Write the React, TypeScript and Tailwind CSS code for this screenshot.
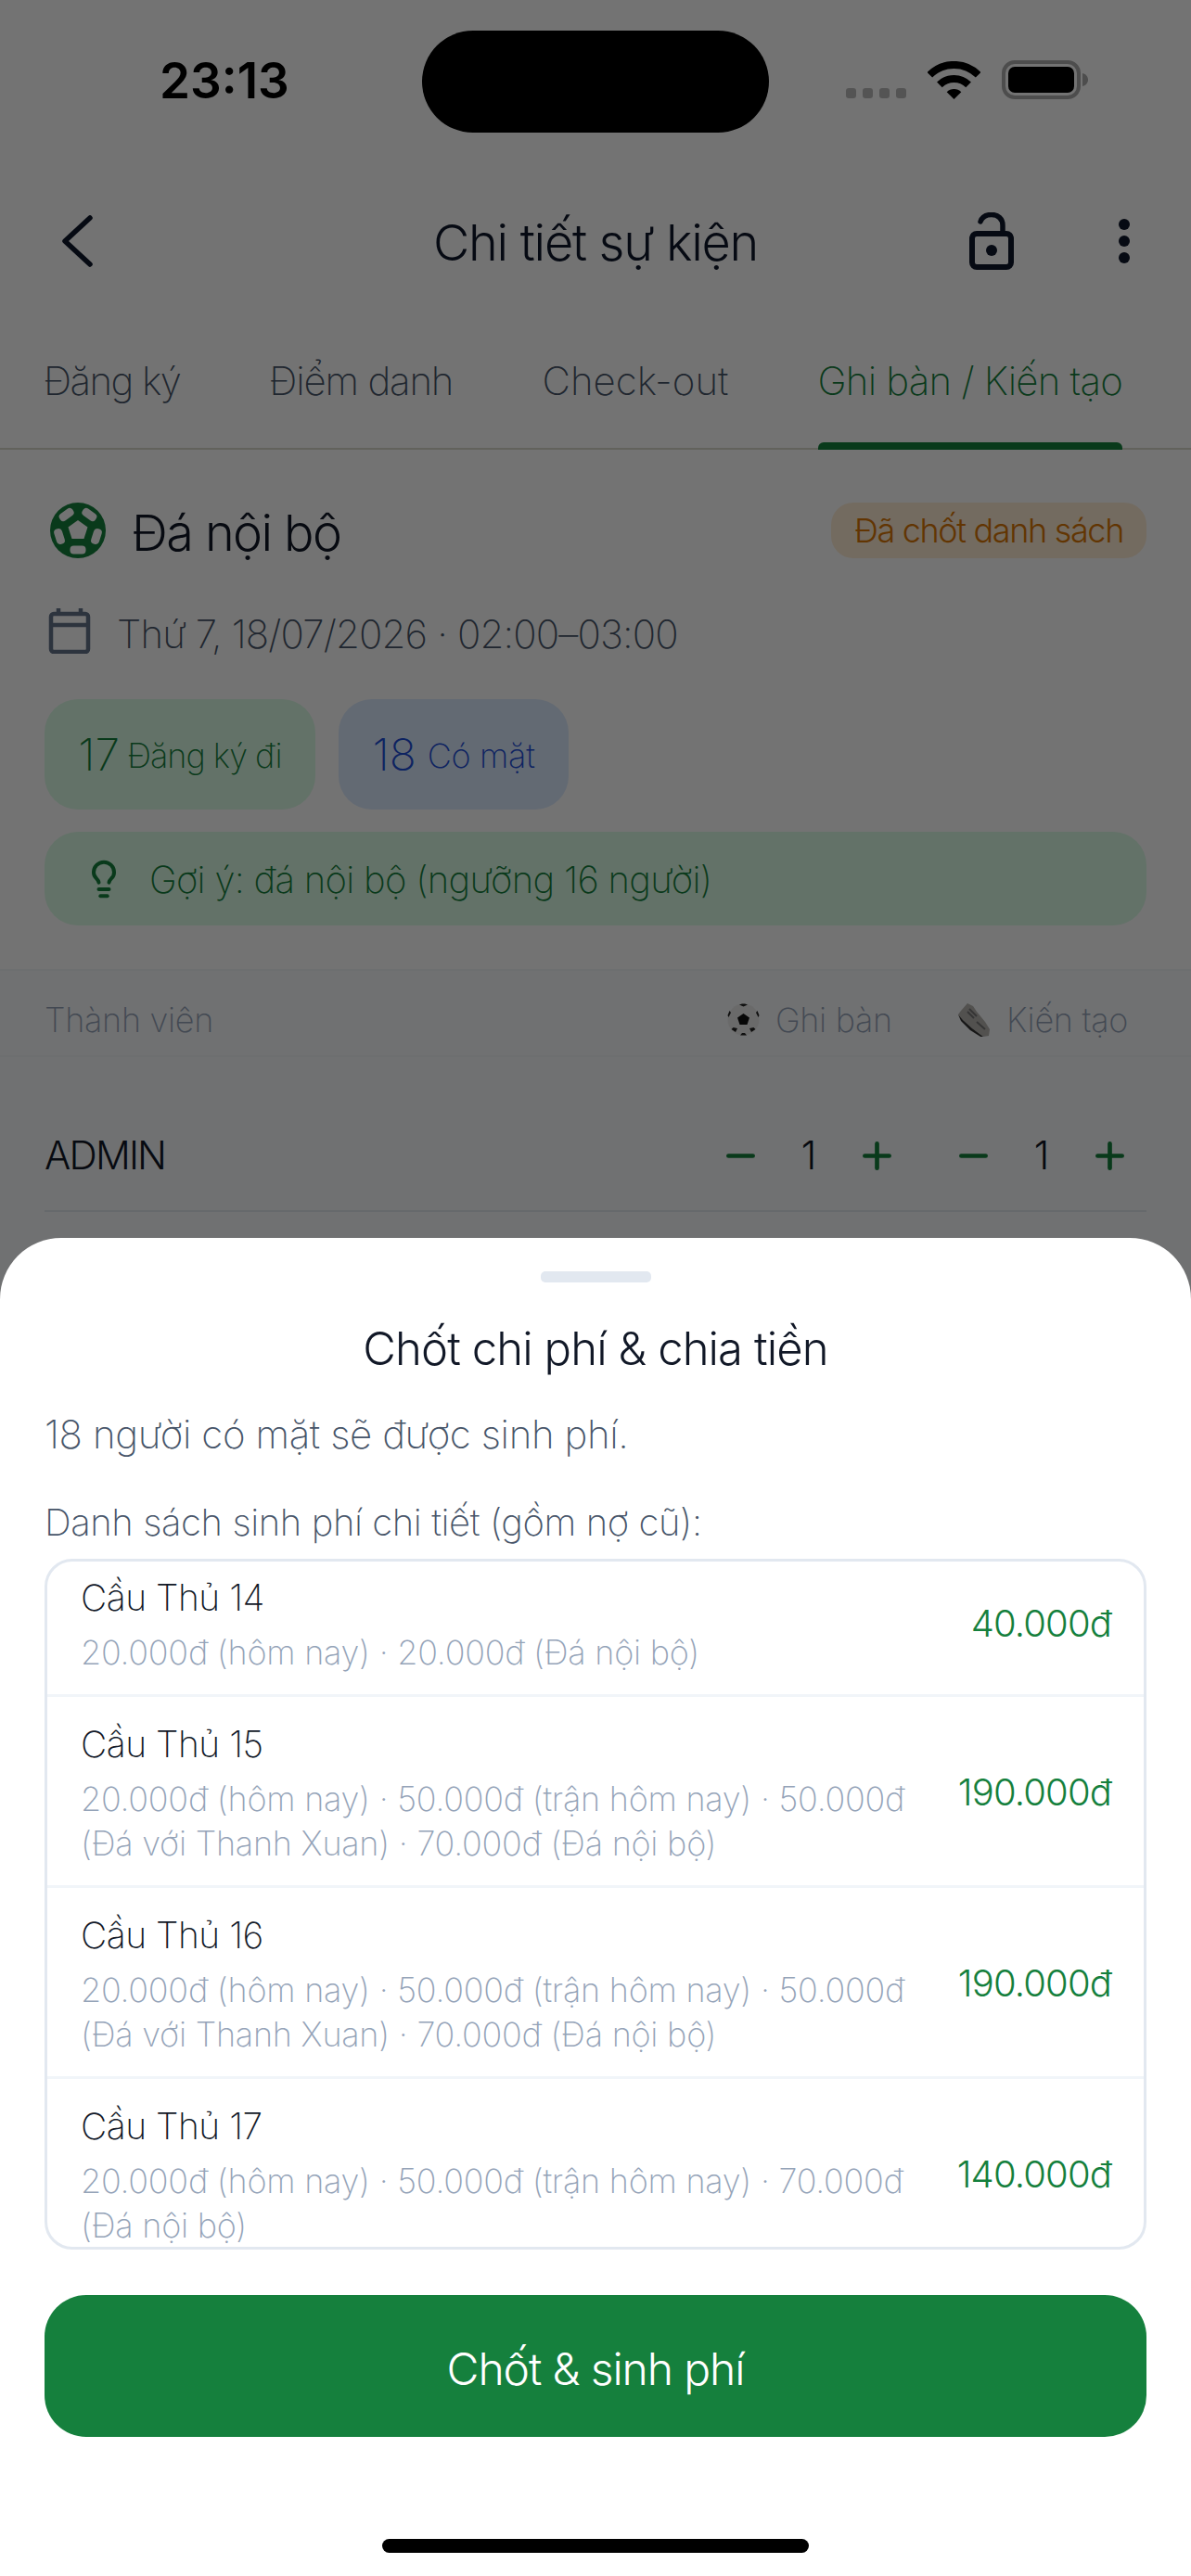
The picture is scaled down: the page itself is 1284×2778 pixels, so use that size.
import { Lightbulb, Minus, Plus } from "lucide-react";

const players = [
  { name: "Cầu Thủ 14", detail: "20.000đ (hôm nay) · 20.000đ (Đá nội bộ)", total: "40.000đ" },
  { name: "Cầu Thủ 15", detail: "20.000đ (hôm nay) · 50.000đ (trận hôm nay) · 50.000đ (Đá với Thanh Xuan) · 70.000đ (Đá nội bộ)", total: "190.000đ" },
  { name: "Cầu Thủ 16", detail: "20.000đ (hôm nay) · 50.000đ (trận hôm nay) · 50.000đ (Đá với Thanh Xuan) · 70.000đ (Đá nội bộ)", total: "190.000đ" },
  { name: "Cầu Thủ 17", detail: "20.000đ (hôm nay) · 50.000đ (trận hôm nay) · 70.000đ (Đá nội bộ)", total: "140.000đ" },
];

function WifiIcon() {
  return (
    <svg width="57" height="41" viewBox="0 0 57 41" fill="none" stroke="#000" strokeWidth="8">
      <path d="M2.3 14.8A37 37 0 0 1 54.7 14.8" />
      <path d="M12.9 25.4A22 22 0 0 1 44.1 25.4" />
      <path d="M28.5 41L20.7 33.2A11 11 0 0 1 36.3 33.2Z" fill="#000" stroke="none" />
    </svg>
  );
}

function BatteryIcon() {
  return (
    <svg width="93" height="42" viewBox="0 0 93 42">
      <rect x="2" y="2" width="81" height="38" rx="12" fill="none" stroke="#aaa" strokeWidth="4" />
      <rect x="7" y="7" width="71" height="28" rx="7" fill="#000" />
      <path d="M87 14C91 15 93 18 93 21C93 24 91 27 87 28Z" fill="#aaa" />
    </svg>
  );
}

function OpenLockIcon() {
  return (
    <svg width="48" height="62" viewBox="0 0 48 62" fill="none" stroke="#0f172a">
      <rect x="3" y="23" width="42" height="36" rx="5" strokeWidth="6" />
      <path d="M12 10C14 4 19 2.5 24 2.5C31 2.5 36 7 36 14V22" strokeWidth="5.5" strokeLinecap="round" />
      <circle cx="24" cy="41" r="6" fill="#0f172a" stroke="none" />
    </svg>
  );
}

function FootballBadge() {
  return (
    <svg width="60" height="60" viewBox="0 0 60 60" className="shrink-0">
      <circle cx="30" cy="30" r="30" fill="#15803d" />
      <path d="M30 19L40.5 26.6L36.5 39H23.5L19.5 26.6Z" fill="#fff" />
      {[36, 108, 180, 252, 324].map((angle) => (
        <rect key={angle} x="21.5" y="4.5" width="17" height="9" rx="4" fill="#fff" transform={`rotate(${angle} 30 30)`} />
      ))}
    </svg>
  );
}

function CalendarIcon() {
  return (
    <svg width="46" height="50" viewBox="0 0 46 50" fill="none" stroke="#64748b" strokeWidth="4.5" className="shrink-0">
      <rect x="3" y="7" width="40" height="41" rx="3" />
      <path d="M3 19H43M11 1V7M35 1V7" />
    </svg>
  );
}

function SoccerEmoji() {
  return (
    <svg width="35" height="35" viewBox="0 0 35 35" className="shrink-0">
      <circle cx="17.5" cy="17.5" r="17" fill="#ececec" />
      <path d="M17.5 11L24 15.5L21.5 23H13.5L11 15.5Z" fill="#111" />
      <path d="M13 1.5L17.5 3.5L22 1.5L19 0.5H16ZM1.5 15L4 10L2.5 8L0.5 13ZM33.5 15L31 10L32.5 8L34.5 13ZM9 31L11 27L6.5 26L4.5 28ZM26 31L24 27L28.5 26L30.5 28ZM14 34.5L21 34.5L19 32H16Z" fill="#222" />
    </svg>
  );
}

function ShoeEmoji() {
  return (
    <svg width="35" height="36" viewBox="0 0 35 36" className="shrink-0">
      <path d="M10 0L16 3L20 9L29 20L34 28L33 35L27 36L15 27L5 18L0 12L3 8Z" fill="#b5b3b0" />
      <path d="M0 12L5 18L15 27L27 36L25 36.5L13 29L3 19Z" fill="#333" />
      <path d="M12 6L20 14M10 9L17 16M20 20L29 28" stroke="#777" strokeWidth="2" fill="none" />
    </svg>
  );
}

function Stepper() {
  return (
    <div className="flex items-center gap-[22px]">
      <Minus size={45} strokeWidth={2.5} className="text-[#15803d]" />
      <span className="w-[58px] text-center text-[42px] leading-[56px] font-light text-[#111827]">1</span>
      <Plus size={45} strokeWidth={2.5} className="text-[#15803d]" />
    </div>
  );
}

export default function App() {
  return (
    <div className="relative h-[2778px] w-[1284px] overflow-hidden bg-white [font-family:Inter,sans-serif] text-[#0f172a]">
      {/* status bar */}
      <div className="flex h-[190px] items-start pt-[33px] pl-[172px]">
        <span className="mt-[24px] w-[135px] text-[53px] leading-[60px] font-semibold whitespace-nowrap text-black">23:13</span>
        <div className="ml-[148px] h-[110px] w-[374px] rounded-[55px] bg-black" />
      </div>
      <div className="absolute top-[65px] left-[912px] flex items-end">
        <div className="mb-[1px] flex gap-[7px]">
          <span className="h-[11px] w-[11px] rounded-[3px] bg-[#bbb]" />
          <span className="h-[11px] w-[11px] rounded-[3px] bg-[#bbb]" />
          <span className="h-[11px] w-[11px] rounded-[3px] bg-[#bbb]" />
          <span className="h-[11px] w-[11px] rounded-[3px] bg-[#bbb]" />
        </div>
        <div className="ml-[23px]"><WifiIcon /></div>
        <div className="ml-[23px]"><BatteryIcon /></div>
      </div>

      {/* navigation bar */}
      <div className="flex h-[144px] items-center px-[66px]">
        <div className="flex-1">
          <svg width="34" height="56" viewBox="0 0 34 56" fill="none" stroke="#0f172a" strokeWidth="5.5" strokeLinecap="round" strokeLinejoin="round" className="-mt-[4px]">
            <path d="M31 3L4 28L31 53" />
          </svg>
        </div>
        <h1 className="text-[54px] leading-[64px] font-light tracking-[-1.3px] whitespace-nowrap">Chi tiết sự kiện</h1>
        <div className="flex flex-1 items-center justify-end gap-[113px]">
          <div className="-mt-[4px]"><OpenLockIcon /></div>
          <div className="-mt-[4px] flex flex-col gap-[6px]">
            <span className="h-[12px] w-[12px] rounded-full bg-[#0f172a]" />
            <span className="h-[12px] w-[12px] rounded-full bg-[#0f172a]" />
            <span className="h-[12px] w-[12px] rounded-full bg-[#0f172a]" />
          </div>
        </div>
      </div>

      {/* tabs */}
      <div className="flex justify-between border-b-2 border-[#d9d9cc] pt-[49px] pr-[74px] pl-[47px] text-[42px] leading-[56px] font-extralight whitespace-nowrap text-[#475569]">
        <div className="-mb-[2px] tracking-[-1.6px]">Đăng ký<div className="mt-[38px] h-[8px]" /></div>
        <div className="-mb-[2px] tracking-[-1.2px]">Điểm danh<div className="mt-[38px] h-[8px]" /></div>
        <div className="-mb-[2px] tracking-[0px]">Check-out<div className="mt-[38px] h-[8px]" /></div>
        <div className="-mb-[2px] tracking-[-0.8px] text-[#15803d]">Ghi bàn / Kiến tạo<div className="mt-[38px] h-[8px] rounded-t-[6px] bg-[#15803d]" /></div>
      </div>

      {/* event summary */}
      <div className="px-[48px] pt-[57px]">
        <div className="flex h-[60px] items-center justify-between">
          <div className="flex items-center gap-[28px] pl-[6px]">
            <FootballBadge />
            <span className="pt-[6px] text-[54px] leading-[60px] font-light tracking-[-1.6px] text-[#111827]">Đá nội bộ</span>
          </div>
          <span className="flex h-[60px] items-center rounded-[24px] bg-[#ffedd5] px-[25px] text-[36px] font-light tracking-[-1.35px] text-[#d97706]">Đã chốt danh sách</span>
        </div>
        <div className="mt-[53px] flex h-[50px] items-center gap-[28px] pl-[4px] text-[42px] font-extralight tracking-[-0.85px] text-[#475569]">
          <CalendarIcon />
          <span className="pt-[7px]">Thứ 7, 18/07/2026 · 02:00–03:00</span>
        </div>
        <div className="mt-[49px] flex gap-[25px]">
          <div className="flex h-[119px] w-[292px] items-center justify-center gap-[8px] rounded-[36px] bg-[#dcfce7] text-[#15803d]">
            <span className="text-[48px] font-extralight">17</span>
            <span className="pt-[2px] text-[36px] font-extralight tracking-[-1px]">Đăng ký đi</span>
          </div>
          <div className="flex h-[119px] w-[248px] items-center justify-center gap-[12px] rounded-[36px] bg-[#dbeafe] text-[#1d4ed8]">
            <span className="text-[48px] font-extralight">18</span>
            <span className="pt-[2px] text-[36px] font-extralight tracking-[-0.3px]">Có mặt</span>
          </div>
        </div>
        <div className="mt-[24px] flex h-[101px] items-center gap-[27px] rounded-[36px] bg-[#dcfce7] pl-[42px] text-[40px] font-extralight tracking-[-0.72px] text-[#15803d]">
          <Lightbulb size={44} strokeWidth={2.2} className="shrink-0" />
          <span className="pt-[2px]">Gợi ý: đá nội bộ (ngưỡng 16 người)</span>
        </div>
      </div>

      {/* scorers table */}
      <div className="mt-[47px] h-[700px] border-t-2 border-[#f1f5f9] bg-[#f8fafc]">
        <div className="flex h-[93px] items-center justify-between border-b-2 border-[#f1f5f9] pt-[14px] pr-[68px] pl-[48px] text-[36px] font-extralight tracking-[-0.3px] text-[#94a3b8]">
          <span>Thành viên</span>
          <div className="flex items-center gap-[71px]">
            <span className="flex items-center gap-[17px]"><SoccerEmoji />Ghi bàn</span>
            <span className="flex items-center gap-[17px]"><ShoeEmoji />Kiến tạo</span>
          </div>
        </div>
        <div className="mx-[48px] mt-[50px] flex h-[117px] items-start justify-between border-b-2 border-[#e2e8f0] pt-[28px] pr-[17px]">
          <span className="text-[42px] leading-[56px] font-light tracking-[-1.8px] text-[#111827]">ADMIN</span>
          <div className="flex gap-[59px]">
            <Stepper />
            <Stepper />
          </div>
        </div>
      </div>

      {/* dimming layer */}
      <div className="absolute inset-0 bg-black/55" />

      {/* bottom sheet */}
      <div className="absolute inset-x-0 bottom-0 flex h-[1443px] flex-col rounded-t-[66px] bg-white px-[48px]">
        <div className="mx-auto mt-[36px] h-[12px] w-[119px] rounded-[5px] bg-[#e2e8f0]" />
        <h2 className="mt-[42px] text-center text-[49px] leading-[60px] font-light tracking-[-0.9px] text-[#111827]">Chốt chi phí &amp; chia tiền</h2>
        <p className="mt-[34px] text-[42px] leading-[56px] font-extralight tracking-[-0.4px] text-[#475569]">18 người có mặt sẽ được sinh phí.</p>
        <p className="mt-[39px] text-[40px] leading-[56px] font-extralight tracking-[-0.42px] text-[#475569]">Danh sách sinh phí chi tiết (gồm nợ cũ):</p>
        <div className="mt-[11px] h-[745px] overflow-hidden rounded-[30px] border-[3px] border-[#e2e8f0]">
          <div className="-mt-[12px]">
            {players.map((player, index) => (
              <div key={player.name} className={index === 0 ? "flex items-center gap-[24px] pt-[24px] pr-[35px] pb-[21px] pl-[36px]" : "flex items-center gap-[24px] border-t-[3px] border-[#f1f5f9] pt-[24px] pr-[35px] pb-[21px] pl-[36px]"}>
                <div className="min-w-0 flex-1">
                  <div className="text-[39px] leading-[54px] font-extralight tracking-[-0.5px] text-[#111827]">{player.name}</div>
                  <div className="mt-[8px] text-[36px] leading-[48px] font-extralight tracking-[-0.24px] text-[#94a3b8]">{player.detail}</div>
                </div>
                <span className="shrink-0 text-[40px] font-light tracking-[-0.85px] text-[#15803d]">{player.total}</span>
              </div>
            ))}
          </div>
        </div>
        <button className="mt-[49px] flex h-[153px] items-center justify-center rounded-[45px] bg-[#15803d] pt-[7px] text-[48px] font-light tracking-[-1.1px] text-white">Chốt &amp; sinh phí</button>
        <div className="mx-auto mt-[110px] h-[15px] w-[460px] rounded-full bg-black" />
      </div>
    </div>
  );
}
